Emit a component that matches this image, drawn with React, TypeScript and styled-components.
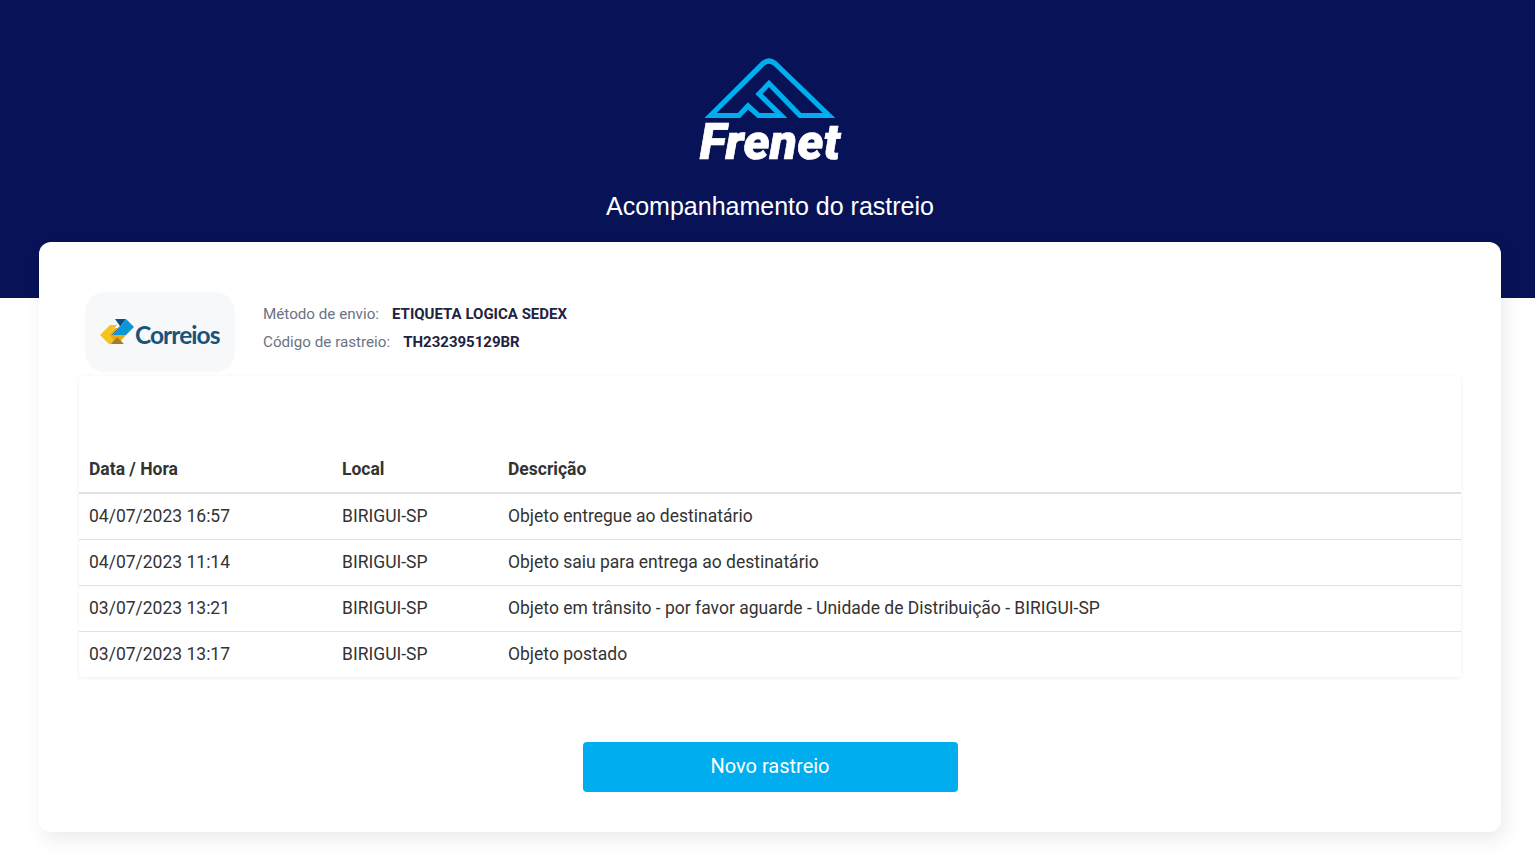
import React from "react";
import styled, { createGlobalStyle } from "styled-components";

const Global = createGlobalStyle`
  html, body { margin: 0; padding: 0; background: #fff; font-family: Roboto, "Liberation Sans", sans-serif; }
  * { box-sizing: border-box; }
`;

const Page = styled.div`
  width: 100%;
  height: 862px;
  overflow: hidden;
  background: #fff;
`;

const Hero = styled.header`
  height: 298px;
  background: #081357;
  display: flex;
  flex-direction: column;
  align-items: center;
  padding-top: 57px;
  color: #fff;
`;

const Brand = styled.div`
  width: 160px;
  display: flex;
  flex-direction: column;
  align-items: center;
  margin-left: 5px;
`;

const BrandWord = styled.span`
  font-family: Roboto, sans-serif;
  font-style: italic;
  font-weight: 900;
  font-size: 49.5px;
  line-height: 42px;
  letter-spacing: 0.2px;
  color: #fff;
  -webkit-text-stroke: 0.7px #fff;
  margin-top: 2px;
`;

const HeroTitle = styled.h1`
  margin: 28px 0 0 5px;
  font-family: "Liberation Sans", Arial, sans-serif;
  font-size: 25px;
  line-height: 30px;
  font-weight: 400;
  color: #fff;
`;

const Card = styled.main`
  width: 1462px;
  height: 590px;
  margin: -56px 0 0 39px;
  position: relative;
  background: #fff;
  border-radius: 12px;
  box-shadow: 4px 8px 20px rgba(0, 0, 0, 0.08);
  padding: 50px 40px 0;
  display: flex;
  flex-direction: column;
`;

const CarrierRow = styled.section`
  display: flex;
  align-items: center;
  gap: 28px;
  padding-left: 6px;
  height: 80px;
`;

const CarrierBadge = styled.div`
  width: 150px;
  height: 80px;
  background: #f6f8fa;
  border-radius: 20px;
  display: flex;
  align-items: center;
  padding-left: 15px;
`;

const CarrierName = styled.span`
  font-family: Lato, sans-serif;
  font-size: 24.5px;
  font-weight: 700;
  letter-spacing: -0.95px;
  color: #1b5279;
  line-height: 25px;
  margin-top: 4px;
`;

const Info = styled.div`
  display: flex;
  flex-direction: column;
  gap: 8px;
  margin-bottom: 8px;
`;

const InfoLine = styled.div`
  font-size: 15.2px;
  line-height: 20px;
  color: #6c7383;
  display: flex;
  gap: 13px;
`;

const InfoValue = styled.strong`
  font-size: 15px;
  font-weight: 700;
  color: #1f2340;
`;

const TableWrap = styled.section`
  margin-top: 4px;
  height: 301px;
  padding-top: 70px;
  background: #fff;
  border-radius: 4px;
  box-shadow: 0 1px 4px rgba(0, 0, 0, 0.07);
`;

const Table = styled.table`
  width: 100%;
  border-collapse: collapse;
  table-layout: fixed;
  font-size: 17.5px;
  color: #333;
`;

const HeadCell = styled.th<{ $w?: number }>`
  width: ${(p) => (p.$w ? `${p.$w}px` : "auto")};
  height: 47px;
  padding: 0 10px;
  text-align: left;
  font-weight: 700;
  border-bottom: 2px solid #dee2e6;
`;

const Row = styled.tr`
  & + & td { border-top: 1px solid #dee2e6; }
`;

const Cell = styled.td`
  height: 46px;
  padding: 0 10px;
  font-weight: 400;
`;

const Actions = styled.div`
  display: flex;
  justify-content: center;
  margin-top: 65px;
`;

const Button = styled.button`
  width: 375px;
  height: 50px;
  border: 0;
  border-radius: 4px;
  padding: 0 0 3px;
  background: #00aeef;
  color: #fff;
  font-family: Roboto, sans-serif;
  font-size: 20px;
`;

const rows = [
  ["04/07/2023 16:57", "BIRIGUI-SP", "Objeto entregue ao destinatário"],
  ["04/07/2023 11:14", "BIRIGUI-SP", "Objeto saiu para entrega ao destinatário"],
  ["03/07/2023 13:21", "BIRIGUI-SP", "Objeto em trânsito - por favor aguarde - Unidade de Distribuição - BIRIGUI-SP"],
  ["03/07/2023 13:17", "BIRIGUI-SP", "Objeto postado"],
];

const Mountain = () => (
  <svg width="130" height="62" viewBox="0 0 130 62" fill="none">
    <path
      d="M5.5 58.500 L58 6.500 Q64 1.500 70 6.500 L124 58.500 L95 58.500 L64 26.500 L54 37 L76 58.500 L53.500 58.500 L43 49 L34 58.500 Z"
      stroke="#00aeef"
      strokeWidth="5.2"
      strokeLinejoin="miter"
    />
  </svg>
);

const CorreiosMark = () => (
  <svg width="35" height="26" viewBox="0 0 35 26">
    <path d="M15 0 H26 L20 8 L13 16 H11 L20 7 Z" fill="#0f4f82" />
    <path d="M26 0 L34 8 L26 16 H13 L20 8 Z" fill="#0b97d6" />
    <path d="M0 16 L10 6 H17 L9 16 L16 25 H9 Z" fill="#f7c21a" />
    <path d="M9 16 L15 9 H18 L12 16 H26 L18 25 H16 Z" fill="#e9ac12" />
    <path d="M11 25 L17 18 L24 25 Z" fill="#a87a2a" />
  </svg>
);

export default function App() {
  return (
    <Page>
      <Global />
      <Hero>
        <Brand>
          <Mountain />
          <BrandWord>Frenet</BrandWord>
        </Brand>
        <HeroTitle>Acompanhamento do rastreio</HeroTitle>
      </Hero>
      <Card>
        <CarrierRow>
          <CarrierBadge>
            <CorreiosMark />
            <CarrierName>Correios</CarrierName>
          </CarrierBadge>
          <Info>
            <InfoLine>
              <span>Método de envio:</span>
              <InfoValue>ETIQUETA LOGICA SEDEX</InfoValue>
            </InfoLine>
            <InfoLine>
              <span>Código de rastreio:</span>
              <InfoValue>TH232395129BR</InfoValue>
            </InfoLine>
          </Info>
        </CarrierRow>
        <TableWrap>
          <Table>
            <thead>
              <tr>
                <HeadCell $w={253}>Data / Hora</HeadCell>
                <HeadCell $w={166}>Local</HeadCell>
                <HeadCell>Descrição</HeadCell>
              </tr>
            </thead>
            <tbody>
              {rows.map((r) => (
                <Row key={r[0] + r[2]}>
                  <Cell>{r[0]}</Cell>
                  <Cell>{r[1]}</Cell>
                  <Cell>{r[2]}</Cell>
                </Row>
              ))}
            </tbody>
          </Table>
        </TableWrap>
        <Actions>
          <Button>Novo rastreio</Button>
        </Actions>
      </Card>
    </Page>
  );
}
